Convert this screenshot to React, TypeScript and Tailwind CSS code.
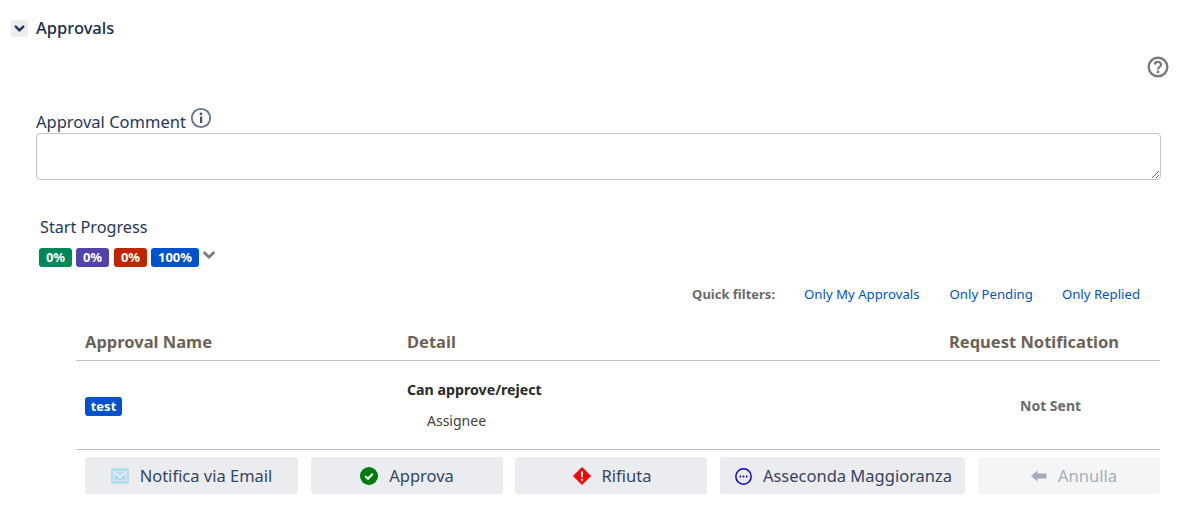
import { ChevronDown } from "lucide-react";

const font = "font-['Noto_Sans',sans-serif]";

const badges = [
  { label: "0%", cls: "bg-[#00875a] w-[33px]" },
  { label: "0%", cls: "bg-[#5243aa] w-[33px]" },
  { label: "0%", cls: "bg-[#bf2600] w-[33px] ml-[1px]" },
  { label: "100%", cls: "bg-[#0052cc] w-[48px]" },
];

function MailIcon() {
  return (
    <svg width="18" height="16" viewBox="0 0 18 16" className="shrink-0">
      <rect width="18" height="16" rx="2" fill="#b3dcec" />
      <path d="M3 4.5 9 9l6-4.5" fill="none" stroke="#ebecf0" strokeWidth="1.6" />
      <path d="M2.5 3.5h13v9h-13z" fill="none" stroke="#ebecf0" strokeWidth="0.8" />
    </svg>
  );
}

function CheckIcon() {
  return (
    <svg width="18" height="18" viewBox="0 0 18 18" className="shrink-0">
      <circle cx="9" cy="9" r="9" fill="#007a0c" />
      <path d="M5.2 9.2 8 11.8l4.8-5" fill="none" stroke="#fff" strokeWidth="2.2" />
    </svg>
  );
}

function DiamondIcon() {
  return (
    <svg width="18" height="18" viewBox="0 0 18 18" className="shrink-0">
      <path d="M9 0.5 17.5 9 9 17.5 0.5 9Z" fill="#f00" stroke="#f00" strokeLinejoin="round" />
      <rect x="8" y="4" width="2" height="6.5" rx="1" fill="#fff" />
      <circle cx="9" cy="13" r="1.2" fill="#fff" />
    </svg>
  );
}

function DotsIcon() {
  return (
    <svg width="17" height="17" viewBox="0 0 16 16" className="shrink-0">
      <circle cx="8" cy="8" r="7.2" fill="none" stroke="#0000ee" strokeWidth="1.4" />
      <circle cx="5" cy="8" r="0.9" fill="#0000ee" />
      <circle cx="8" cy="8" r="0.9" fill="#0000ee" />
      <circle cx="11" cy="8" r="0.9" fill="#0000ee" />
    </svg>
  );
}

function BackIcon() {
  return (
    <svg width="16" height="12" viewBox="0 0 16 12" className="shrink-0">
      <path d="M0 6 6.5 0.5V3.5H15.5V8.5H6.5V11.5Z" fill="#a5adba" />
    </svg>
  );
}

function ActionButton({
  icon,
  label,
  className,
  disabled,
}: {
  icon: React.ReactNode;
  label: string;
  className: string;
  disabled?: boolean;
}) {
  return (
    <button
      className={`flex h-[37px] items-center justify-center gap-[11px] rounded-[3px] pt-[1px] text-[16.5px] ${
        disabled ? "bg-[#f4f5f7] text-[#a5adba]" : "bg-[#ebecf0] text-[#344563]"
      } ${className}`}
    >
      {icon}
      <span>{label}</span>
    </button>
  );
}

export default function App() {
  return (
    <div className={`${font} h-[508px] w-[1187px] overflow-hidden bg-white text-[#172b4d]`}>
      {/* Section header */}
      <div className="flex items-center gap-[8px] pl-[11px] pt-[17px]">
        <span className="flex h-[17px] w-[17px] items-center justify-center rounded-[3px] bg-[#ebecf0]">
          <ChevronDown size={15} strokeWidth={4} className="text-[#253858]" />
        </span>
        <h2 className="text-[16.5px] leading-[22px] font-medium">Approvals</h2>
      </div>

      <div className="flex justify-end pr-[18px] pt-[17px]">
        <svg width="22" height="22" viewBox="0 0 22 22">
          <circle cx="11" cy="11" r="9.3" fill="none" stroke="#7a7a7a" strokeWidth="2.4" />
          <path
            d="M7.8 8.6C7.8 6.8 9.2 5.8 11 5.8s3.2 1 3.2 2.7c0 2.4-3.2 2.4-3.2 4.9"
            fill="none"
            stroke="#7a7a7a"
            strokeWidth="2.2"
          />
          <circle cx="11" cy="16" r="1.4" fill="#7a7a7a" />
        </svg>
      </div>

      {/* Comment */}
      <div className="pl-[36px] pr-[26px] pt-[31px]">
        <label className="flex h-[24px] items-start gap-[4px] text-[16.5px] leading-[26px] text-[#253858]">
          Approval Comment
          <svg width="22" height="22" viewBox="0 0 22 22" className="-mt-[2px]">
            <circle cx="11" cy="11" r="9.2" fill="none" stroke="#5e7391" strokeWidth="1.8" />
            <rect x="10" y="9.5" width="2.2" height="6.5" fill="#42526e" />
            <circle cx="11" cy="6.8" r="1.4" fill="#42526e" />
          </svg>
        </label>
        <textarea className="block h-[47px] w-full rounded-[4px] border border-[#c4c4c4] bg-white" />
      </div>

      {/* Progress */}
      <div className="pl-[39px] pt-[35px]">
        <div className="pl-[1px] text-[16.2px] leading-[24px] text-[#253858]">Start Progress</div>
        <div className="mt-[9px] flex items-center gap-[4px]">
          {badges.map((b, i) => (
            <span
              key={i}
              className={`flex h-[19px] items-center justify-center rounded-[3px] text-[13px] leading-none font-bold text-white ${b.cls}`}
            >
              {b.label}
            </span>
          ))}
          <ChevronDown size={18} strokeWidth={3.5} className="-mt-[6px] -ml-[3px] text-[#7a7a7a]" />
        </div>
      </div>

      {/* Quick filters */}
      <div className="flex items-center justify-end pr-[47px] pt-[18px] text-[13.2px] leading-[18px]">
        <span className="mr-[29px] text-[13px] font-bold text-[#6b6b6b]">Quick filters:</span>
        <a className="mr-[30px] text-[#0052cc]">Only My Approvals</a>
        <a className="mr-[29px] text-[#0052cc]">Only Pending</a>
        <a className="text-[#0052cc]">Only Replied</a>
      </div>

      {/* Approvals table */}
      <div className="ml-[76px] mr-[27px] mt-[20px]">
        <div className="flex h-[38px] items-center border-b border-[#c1c1c1] pt-[2px] text-[16.5px] font-bold text-[#6b6358]">
          <div className="w-[322px] pl-[9px]">Approval Name</div>
          <div className="w-[542px] pl-[9px]">Detail</div>
          <div className="flex-1 pl-[9px]">Request Notification</div>
        </div>
        <div className="flex h-[89px] items-center border-b border-[#c1c1c1]">
          <div className="w-[322px] pl-[9px]">
            <span className="inline-flex h-[19px] w-[37px] items-center justify-center rounded-[3px] bg-[#0052cc] text-[13px] leading-none font-bold text-white">
              test
            </span>
          </div>
          <div className="w-[542px] pl-[9px] text-[#292929]">
            <div className="text-[14.2px] leading-[20px] font-bold">Can approve/reject</div>
            <div className="mt-[11px] pl-[20px] text-[14px] leading-[20px] text-[#42403d]">Assignee</div>
          </div>
          <div className="flex-1 pl-[80px] text-[14px] font-bold text-[#6b6b6b]">Not Sent</div>
        </div>
        <div className="mt-[7px] flex">
          <ActionButton icon={<MailIcon />} label="Notifica via Email" className="ml-[9px] w-[213px]" />
          <ActionButton icon={<CheckIcon />} label="Approva" className="ml-[13px] w-[192px]" />
          <ActionButton icon={<DiamondIcon />} label="Rifiuta" className="ml-[12px] w-[192px] pl-[2px]" />
          <ActionButton icon={<DotsIcon />} label="Asseconda Maggioranza" className="ml-[13px] w-[245px] pl-[2px]" />
          <ActionButton icon={<BackIcon />} label="Annulla" className="ml-[13px] flex-1 pl-[10px]" disabled />
        </div>
      </div>
    </div>
  );
}
